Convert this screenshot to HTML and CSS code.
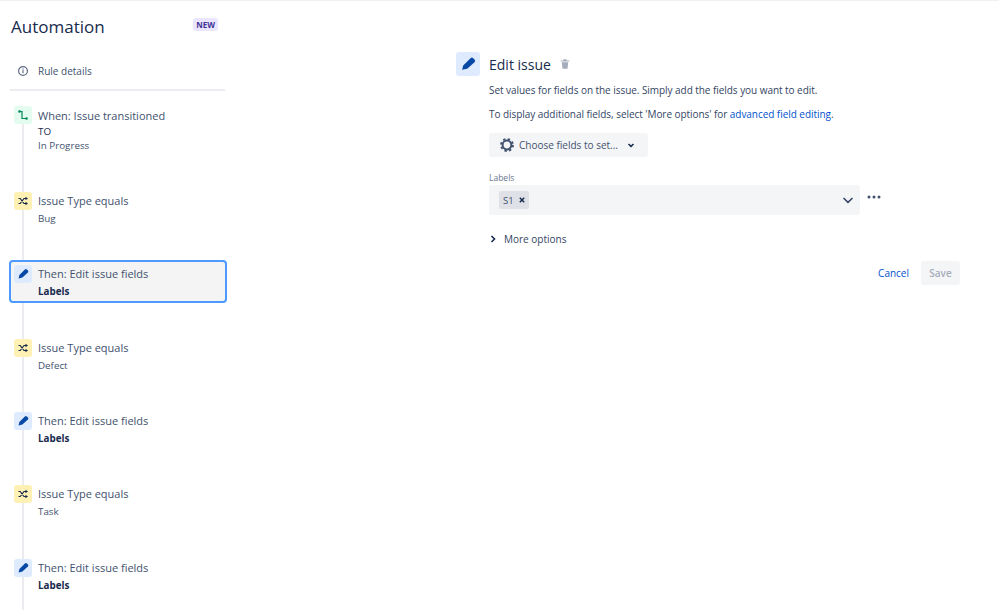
FILE: index.html
```html
<!DOCTYPE html>
<html lang="en">
<head>
<meta charset="utf-8">
<title>Automation</title>
<link rel="stylesheet" href="styles.css">
</head>
<body>
<div class="page">
  <aside class="sidebar">
    <header class="side-head">
      <h1 class="side-title">Automation</h1>
      <span class="badge">NEW</span>
    </header>
    <div class="details">
      <svg class="info" viewBox="0 0 12 12" width="12" height="12"><circle cx="6" cy="6" r="4.4" fill="none" stroke="#5e6c84" stroke-width="1.2"/><rect x="5.4" y="5.2" width="1.2" height="3" fill="#5e6c84"/><rect x="5.4" y="3.4" width="1.2" height="1.2" fill="#5e6c84"/></svg>
      <span>Rule details</span>
    </div>
    <div class="steps">
      <div class="step first">
        <span class="ico green"><svg viewBox="0 0 18 18" width="18" height="18"><path d="M5.500 5.500H8v7h4.500" fill="none" stroke="#00875a" stroke-width="1.200"/><circle cx="5.500" cy="5.500" r="1.300" fill="#00875a"/><circle cx="12.500" cy="12.500" r="1.300" fill="#00875a"/></svg></span>
        <div class="step-text first-text"><div class="step-title">When: Issue transitioned</div><div class="step-sub dark">TO</div><div class="step-sub plain">In Progress</div></div>
      </div>
      <div class="step">
        <span class="ico yellow"><svg viewBox="0 0 18 18" width="18" height="18"><use href="#shuffle"/></svg></span>
        <div class="step-text"><div class="step-title">Issue Type equals</div><div class="step-sub">Bug</div></div>
      </div>
      <div class="step selected">
        <span class="ico blue"><svg viewBox="0 0 18 18" width="18" height="18"><use href="#pencil"/></svg></span>
        <div class="step-text"><div class="step-title">Then: Edit issue fields</div><div class="step-sub strong">Labels</div></div>
      </div>
      <div class="step">
        <span class="ico yellow"><svg viewBox="0 0 18 18" width="18" height="18"><use href="#shuffle"/></svg></span>
        <div class="step-text"><div class="step-title">Issue Type equals</div><div class="step-sub">Defect</div></div>
      </div>
      <div class="step">
        <span class="ico blue"><svg viewBox="0 0 18 18" width="18" height="18"><use href="#pencil"/></svg></span>
        <div class="step-text"><div class="step-title">Then: Edit issue fields</div><div class="step-sub strong">Labels</div></div>
      </div>
      <div class="step">
        <span class="ico yellow"><svg viewBox="0 0 18 18" width="18" height="18"><use href="#shuffle"/></svg></span>
        <div class="step-text"><div class="step-title">Issue Type equals</div><div class="step-sub">Task</div></div>
      </div>
      <div class="step">
        <span class="ico blue"><svg viewBox="0 0 18 18" width="18" height="18"><use href="#pencil"/></svg></span>
        <div class="step-text"><div class="step-title">Then: Edit issue fields</div><div class="step-sub strong">Labels</div></div>
      </div>
    </div>
  </aside>
  <main class="main">
    <span class="main-ico"><svg viewBox="0 0 18 18" width="24" height="24"><use href="#pencil"/></svg></span>
    <div class="form">
      <div class="form-head">
        <h2 class="form-title">Edit issue</h2>
        <svg class="trash" viewBox="0 0 12 12" width="12" height="12"><path d="M1.800 2.400h8.400v1.200H1.800zM4.400 1.200h3.200v1.200H4.400zM2.800 4.300h6.400l-.7 6.500H3.500z" fill="#a5adba"/></svg>
      </div>
      <p class="desc first-desc">Set values for fields on the issue. Simply add the fields you want to edit.</p>
      <p class="desc">To display additional fields, select 'More options' for <a class="link" href="#">advanced field editing</a>.</p>
      <button class="choose" type="button">
        <svg viewBox="0 0 16 16" width="16" height="16"><circle cx="8" cy="8" r="4.400" fill="none" stroke="#42526e" stroke-width="2"/><circle cx="8" cy="8" r="6" fill="none" stroke="#42526e" stroke-width="1.800" stroke-dasharray="2.400 2.312"/></svg>
        <span>Choose fields to set...</span>
        <svg viewBox="0 0 10 10" width="10" height="10"><path d="M2.500 4l2.500 2.400L7.500 4" fill="none" stroke="#172b4d" stroke-width="1.500"/></svg>
      </button>
      <label class="field-label">Labels</label>
      <div class="field-row">
        <div class="select">
          <span class="tag">S1<svg viewBox="0 0 8 8" width="8" height="8"><path d="M1.800 1.800l4.400 4.400M6.200 1.800L1.800 6.200" stroke="#172b4d" stroke-width="1.500"/></svg></span>
          <svg class="caret" viewBox="0 0 12 12" width="12" height="12"><path d="M1.500 4l4.500 4.400L10.500 4" fill="none" stroke="#344563" stroke-width="1.500"/></svg>
        </div>
        <svg class="dots" viewBox="0 0 14 4" width="14" height="4"><circle cx="2" cy="2" r="1.500" fill="#42526e"/><circle cx="7" cy="2" r="1.500" fill="#42526e"/><circle cx="12" cy="2" r="1.500" fill="#42526e"/></svg>
      </div>
      <div class="more">
        <svg viewBox="0 0 8 8" width="8" height="8"><path d="M2.500 1l3 3-3 3" fill="none" stroke="#172b4d" stroke-width="1.600"/></svg>
        <span>More options</span>
      </div>
      <div class="actions">
        <a class="cancel" href="#">Cancel</a>
        <button class="save" type="button" disabled>Save</button>
      </div>
    </div>
  </main>
</div>
<svg class="defs" width="0" height="0" aria-hidden="true">
  <defs>
    <symbol id="pencil" viewBox="0 0 18 18"><path d="M4.600 13.400l.8-3.300 5.500-5.500q1-1 2 0l1 1q1 1 0 2l-5.500 5z" fill="#0747a6"/></symbol>
    <symbol id="shuffle" viewBox="0 0 18 18"><path d="M4.500 6.500h1.700l3.800 5h2M4.500 11.500h1.700l3.800-5h2" fill="none" stroke="#172b4d" stroke-width="1.200"/><path d="M11.500 4.700l2.500 1.800-2.500 1.800zM11.500 9.700l2.500 1.800-2.500 1.800z" fill="#172b4d"/></symbol>
  </defs>
</svg>
</body>
</html>
```
FILE: styles.css
```css
* { box-sizing: border-box; }
html, body { margin: 0; height: 100%; overflow: hidden; }
body { background: #fff; color: #172b4d; font-family: "Open Sans", "Noto Sans", sans-serif; font-size: 10px; }
.page { display: flex; height: 610px; border-top: 1px solid #f0f1f3; }
.sidebar { width: 456px; padding-left: 9px; flex: none; }
.side-head { width: 207px; margin-left: 2px; display: flex; justify-content: space-between; align-items: center; height: 51px; }
.side-title { margin: 0; font-size: 17px; font-weight: 500; color: #172b4d; }
.badge { background: #eae6ff; color: #403294; font-size: 8px; font-weight: 700; padding: 1px 3px; border-radius: 3px; margin-top: -5px; }
.details { width: 215px; margin-left: 1px; height: 39px; display: flex; align-items: center; gap: 9px; padding: 1px 0 0 7px; border-bottom: 2px solid #ebecf0; color: #42526e; }
.steps { position: relative; width: 218px; padding-top: 10px; }
.steps::before { content: ""; position: absolute; left: 13px; top: 33px; bottom: -30px; width: 2px; background: #ebecf0; }
.step { position: relative; display: flex; gap: 6px; height: 43px; margin-bottom: 30.330px; padding: 4px; border: 1px solid transparent; border-radius: 4px; }
.step.first { margin-bottom: 34px; height: 52px; padding-bottom: 0; }
.step.selected { background: #f4f4f4; border: 2px solid #4c9aff; padding: 3px; }
.ico { flex: none; width: 18px; height: 18px; border-radius: 3px; }
.ico svg { display: block; }
.first-text { margin-top: 1px; }
.green { background: #e3fcef; }
.yellow { background: #fff0b3; }
.blue { background: #deebff; }
.step-title { font-size: 11px; line-height: 18px; color: #42526e; }
.step-sub { font-size: 9.800px; line-height: 14px; margin-top: 2px; color: #42526e; }
.step-sub.dark { color: #172b4d; margin-top: 0; }
.step-sub.plain { margin-top: 0; }
.step-sub.strong { color: #172b4d; font-weight: 700; }
.main { display: flex; gap: 9px; padding-top: 51px; flex: 1; align-items: flex-start; }
.main-ico { flex: none; width: 24px; height: 24px; background: #deebff; border-radius: 3px; }
.main-ico svg { display: block; }
.form { width: 471px; }
.form-head { display: flex; align-items: center; gap: 8px; height: 24px; }
.form-title { margin: 0; font-size: 14px; font-weight: 500; color: #172b4d; }
.desc { margin: 0 0 10px; line-height: 14px; color: #344563; letter-spacing: -0.05px; }
.first-desc { margin-top: 7px; }
.link { color: #0052cc; text-decoration: none; }
.choose { display: flex; align-items: center; gap: 4px; margin-top: 12px; width: 159px; height: 24px; border: 0; background: #f4f5f7; border-radius: 3px; padding: 0 0 0 10px; font: inherit; color: #42526e; }
.choose span { margin-right: 4px; }
.field-label { display: block; margin-top: 15px; font-size: 8.500px; line-height: 12px; color: #6b778c; font-weight: 500; }
.field-row { display: flex; gap: 7px; margin-top: 1px; align-items: flex-start; }
.select { width: 371px; height: 30px; background: #f4f5f7; border-radius: 3px; display: flex; align-items: center; justify-content: space-between; padding: 0 6px 0 10px; }
.tag { display: flex; align-items: center; gap: 4px; height: 18px; background: #dfe1e6; border-radius: 2px; padding: 0 3px 0 4px; color: #42526e; font-size: 9.500px; }
.dots { margin-top: 10px; }
.more { display: flex; align-items: center; gap: 7px; margin-top: 17px; color: #344563; font-weight: 500; line-height: 14px; }
.actions { display: flex; justify-content: flex-end; align-items: center; gap: 12px; margin-top: 15px; }
.cancel { color: #0052cc; text-decoration: none; font-weight: 500; }
.save { width: 39px; height: 24px; border: 0; border-radius: 3px; background: #f4f5f7; color: #a5adba; font: inherit; font-weight: 600; }
.defs { position: absolute; }
```
